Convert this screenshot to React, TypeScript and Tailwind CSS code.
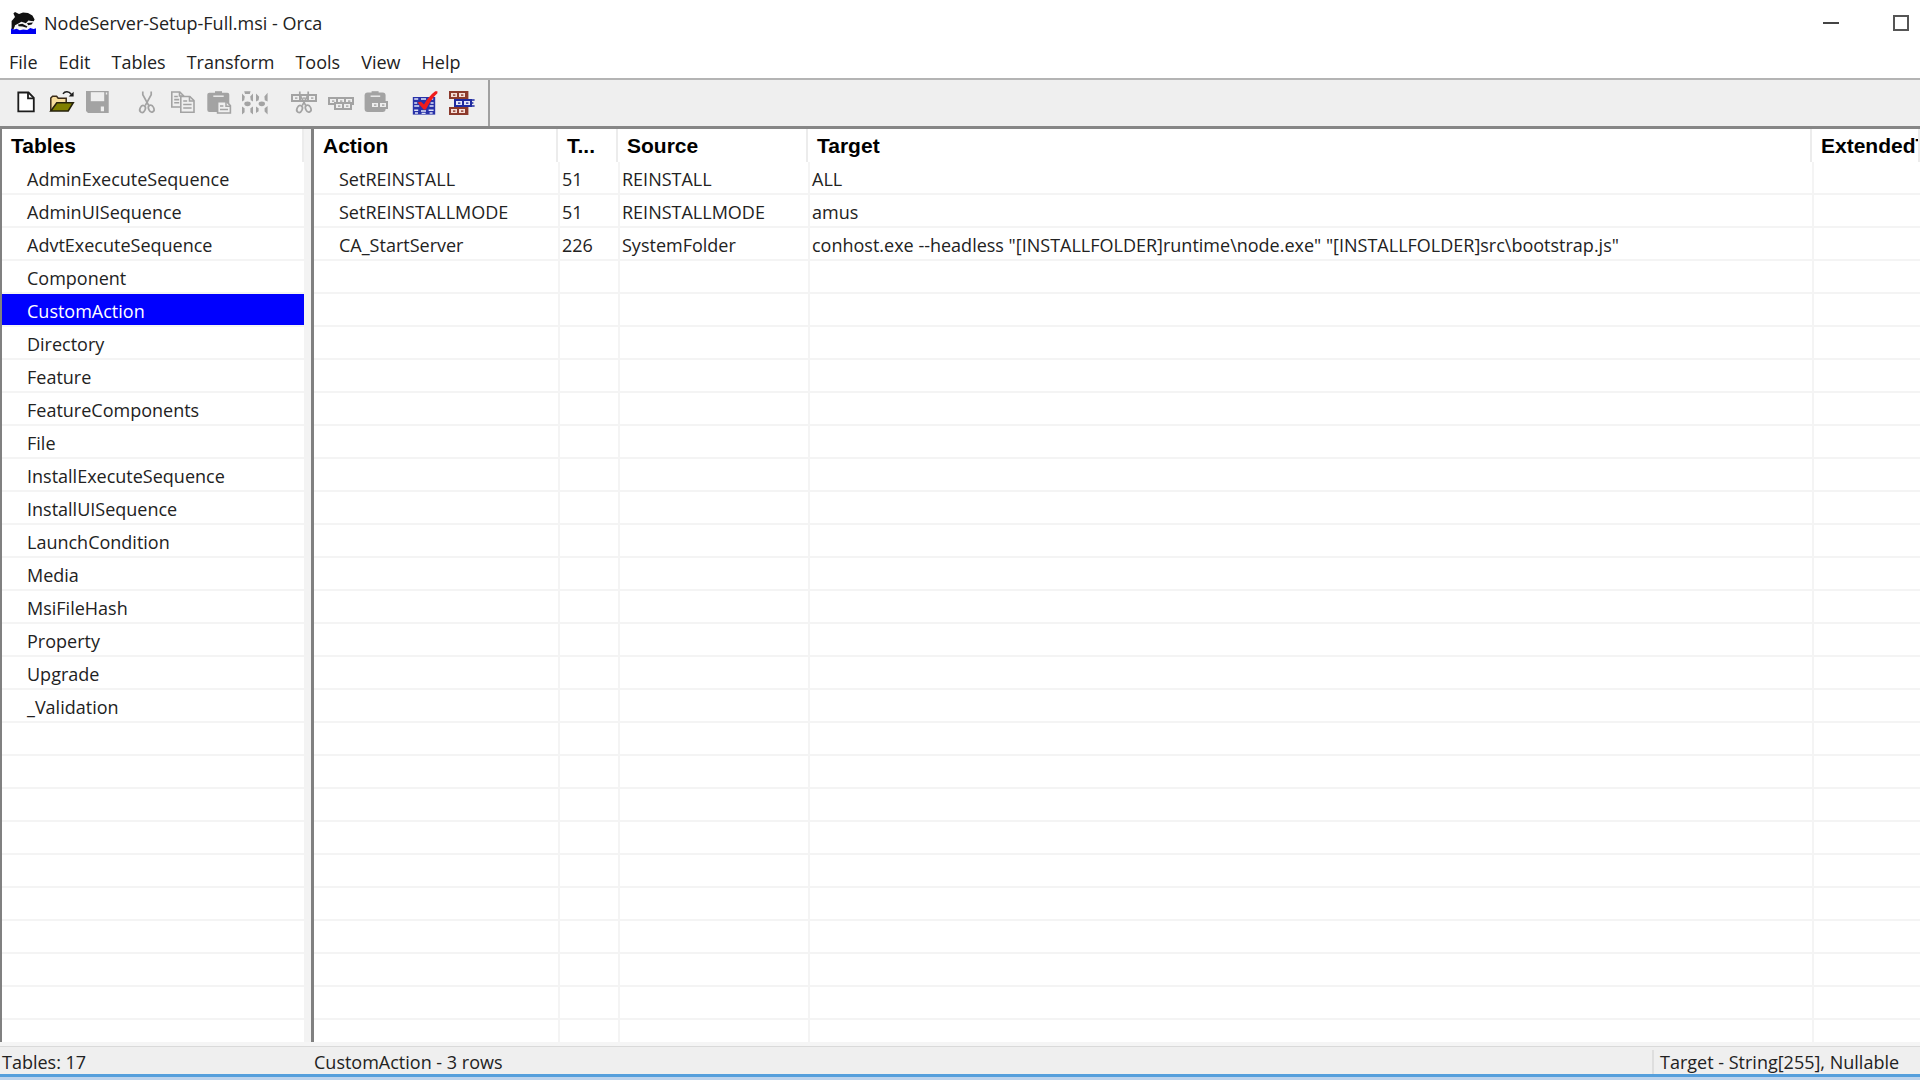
import type { ReactNode } from 'react';

interface ActionRow {
  action: string;
  type: string;
  source: string;
  target: string;
}

interface Tool {
  label: string;
  icon: ReactNode;
  disabled?: boolean;
}

const VISIBLE_ROWS = 27;
const GREY = '#a3a3a3';

const menus = ['File', 'Edit', 'Tables', 'Transform', 'Tools', 'View', 'Help'];

const tables = [
  'AdminExecuteSequence',
  'AdminUISequence',
  'AdvtExecuteSequence',
  'Component',
  'CustomAction',
  'Directory',
  'Feature',
  'FeatureComponents',
  'File',
  'InstallExecuteSequence',
  'InstallUISequence',
  'LaunchCondition',
  'Media',
  'MsiFileHash',
  'Property',
  'Upgrade',
  '_Validation',
];

const actions: ActionRow[] = [
  { action: 'SetREINSTALL', type: '51', source: 'REINSTALL', target: 'ALL' },
  { action: 'SetREINSTALLMODE', type: '51', source: 'REINSTALLMODE', target: 'amus' },
  {
    action: 'CA_StartServer',
    type: '226',
    source: 'SystemFolder',
    target: 'conhost.exe --headless "[INSTALLFOLDER]runtime\\node.exe" "[INSTALLFOLDER]src\\bootstrap.js"',
  },
];

function Icon({ children }: { children: ReactNode }) {
  return (
    <svg width="28" height="28" viewBox="0 0 28 28" fill="none" aria-hidden="true" className="shrink-0">
      {children}
    </svg>
  );
}

// One table row drawn as a bar with small cells
function Cells({ x, y, n, color, fill = '#efefef' }: { x: number; y: number; n: number; color: string; fill?: string }) {
  return (
    <g>
      <rect x={x} y={y} width={n * 8 + 2} height="8" fill={color} />
      {Array.from({ length: n }, (_, i) => (
        <g key={i}>
          <rect x={x + 2 + i * 8} y={y + 2} width="6" height="4" fill={fill} />
          <rect x={x + 4 + i * 8} y={y + 3.4} width="2.4" height="1.4" fill={color} />
        </g>
      ))}
    </g>
  );
}

const scissors = (
  <g stroke={GREY} strokeWidth="1.7">
    <path d="M9.8 3.5v3.2l6 11M18.2 3.5v3.2l-6 11" />
    <ellipse cx="9.6" cy="21" rx="2.6" ry="3.6" transform="rotate(25 9.6 21)" />
    <ellipse cx="18.2" cy="20.6" rx="2.6" ry="3.6" transform="rotate(-25 18.2 20.6)" />
  </g>
);

const toolGroups: Tool[][] = [
  [
    {
      label: 'New',
      icon: (
        <Icon>
          <path d="M6.3 4.5h10.2l5.3 5.3v13.6H6.3z" fill="#fff" stroke="#1c1c1c" strokeWidth="1.8" />
          <path d="M16 4.5v5.8h5.8" stroke="#1c1c1c" strokeWidth="1.8" />
        </Icon>
      ),
    },
    {
      label: 'Open',
      icon: (
        <Icon>
          <path d="M2.8 22.8V10l1.8-1.8h4l1.6 2h8v5" fill="#f7dd9c" stroke="#3a2a18" strokeWidth="1.5" />
          <path d="M8.8 14.8h16.4l-5 8.2H2.8z" fill="#808000" stroke="#26220c" strokeWidth="1.6" />
          <path d="M15 5.8c2-3 6-2.6 8.2.4" stroke="#1c1c1c" strokeWidth="1.5" />
          <path d="M25.6 3.8v4.8h-5z" fill="#1c1c1c" />
        </Icon>
      ),
    },
    {
      label: 'Save',
      disabled: true,
      icon: (
        <Icon>
          <path d="M2 3h22.7v22H4l-2-2z" fill={GREY} />
          <path d="M6.8 4.2h13.4v9H6.8z" fill="#efefef" />
          <path d="M21.8 4.5h1.4v2h-1.4zM16.8 18.5h3.2v4.8h-3.2z" fill="#efefef" />
        </Icon>
      ),
    },
  ],
  [
    { label: 'Cut', disabled: true, icon: <Icon>{scissors}</Icon> },
    {
      label: 'Copy',
      disabled: true,
      icon: (
        <Icon>
          <g stroke={GREY} strokeWidth="1.6">
            <path d="M2.8 4h8l3.8 3.8V19H2.8z" />
            <path d="M10.5 4v4h4M5.2 8.5h3.6M5.2 11.6h5M5.2 14.8h5" />
            <path d="M11.8 8.5h9l4.2 4.2v11.5H11.8z" fill="#efefef" />
            <path d="M20.5 8.5V13H25M14.2 13h4M14.2 16.5h8.4M14.2 20h8.4" />
          </g>
        </Icon>
      ),
    },
    {
      label: 'Paste',
      disabled: true,
      icon: (
        <Icon>
          <rect x="2.3" y="4.8" width="22" height="19.2" rx="2" fill={GREY} />
          <path d="M10 3.2h7v3h-7z" fill={GREY} />
          <path d="M8.3 8.2h10.4" stroke="#efefef" strokeWidth="1.4" />
          <path d="M12.6 13.8h9l3.8 3.8v7.4H12.6z" fill="#efefef" stroke={GREY} strokeWidth="1.6" />
          <path d="M21 13.8v4.4h4.4M15 18h3.4M15 21.6h8" stroke={GREY} strokeWidth="1.5" />
        </Icon>
      ),
    },
    {
      label: 'Delete',
      disabled: true,
      icon: (
        <Icon>
          <g fill={GREY}>
            <path d="M3.2 3.2h6.4L8.8 6H4zM1 5.4l2.8 3-.6 3.8L1 13.4zM12 5.4L9.2 8.4l.6 3.8 2.2 1.2z" />
            <ellipse cx="6.5" cy="15.8" rx="3.2" ry="2.4" />
            <path d="M1 18.4l2.6 1.8v4L1 26.4zM12 18.4l-2.6 1.8v4l2.6 2.2z" />
            <path d="M15 5.4l3.2 3.4-.6 3.4-2.6 1.2zM26.6 4.8v8.8l-2.8-1.4-.4-3.6z" />
            <ellipse cx="20.8" cy="15.8" rx="3.2" ry="2.4" />
            <path d="M15 18.4l2.6 1.8v3L15 25zM26.6 18l-3 2.2v3.4l3 3z" />
          </g>
        </Icon>
      ),
    },
  ],
  [
    {
      label: 'Cut Row',
      disabled: true,
      icon: (
        <Icon>
          <Cells x={1} y={6} n={3} color={GREY} />
          {scissors}
        </Icon>
      ),
    },
    {
      label: 'Copy Row',
      disabled: true,
      icon: (
        <Icon>
          <Cells x={2} y={9} n={3} color={GREY} />
          <Cells x={8} y={14} n={2} color={GREY} />
        </Icon>
      ),
    },
    {
      label: 'Paste Row',
      disabled: true,
      icon: (
        <Icon>
          <rect x="2.6" y="4.6" width="21" height="19.4" rx="3" fill={GREY} />
          <path d="M9.6 3.2h7v3h-7z" fill={GREY} />
          <path d="M8.6 8.2h9.6" stroke="#efefef" strokeWidth="1.4" />
          <Cells x={8} y={13} n={2} color={GREY} />
        </Icon>
      ),
    },
  ],
  [
    {
      label: 'Validate',
      icon: (
        <Icon>
          <rect x="1.8" y="9" width="22.4" height="17.6" fill="#2832a8" />
          <path
            d="M3.2 11h4M10 11h5M17.6 11h4.6M3.2 15h3M19.6 15h3M3.2 18h5M18.6 18h4M3.2 22.2h4M10 23h5M17.6 22.2h5M4 25h3M10.6 25.4h4M18.6 25h3"
            stroke="#dfe3f8"
            strokeWidth="1.4"
          />
          <path d="M24.2 3.2h2.2v2c-5 4.6-8.2 9.8-11.6 16.4h-2.2l-6-7 3.4-.8 3 2.6c3-5.4 6.6-9.6 11.2-13.2z" fill="#f01c1c" />
        </Icon>
      ),
    },
    {
      label: 'Show Patches',
      icon: (
        <Icon>
          <Cells x={2} y={3} n={2} color="#8c3a2c" fill="#f6ddd6" />
          <rect x="19.6" y="3" width="1.8" height="8" fill="#8c3a2c" />
          <Cells x={2} y={19} n={2} color="#8c3a2c" fill="#f6ddd6" />
          <rect x="19.6" y="19" width="1.8" height="8" fill="#8c3a2c" />
          <Cells x={7} y={11} n={2} color="#1f2ba0" fill="#e4e8fb" />
          <path d="M25 12h2.6M25 18h2.6M25 15h1.4" stroke="#1f2ba0" strokeWidth="1.6" />
        </Icon>
      ),
    },
  ],
];

function OrcaLogo() {
  return (
    <svg width="26" height="24" viewBox="0 0 26 24" aria-hidden="true" className="shrink-0">
      <path d="M3 8.4L5 6 3.4 2.4 5 1l4 2 4-1.6L18 2l4.4 2.6 2.2 4-1 1.8-4.2-.2-2.8 1.6 2.6 1.4-1 1.2-5-1.4-4.6.6L5.4 15l-2.2 3.4H1.6V10z" fill="#111" />
      <path d="M4 18.6l1-4.4 3-1.4 3.4-2 4.6 1.4 2.4-2.6 5.6 1-.4 1.8-4.4.8 2.4 2-1.2 3.4H4z" fill="#f6f6f6" />
      <path d="M8 13.4l4.4-.6 5 2.6-.8 1.4-4-1.2-4-.4z" fill="#111" />
      <path d="M17 12l6-.4-1.4 2-3.4.6z" fill="#111" />
      <path d="M1 17.6l3 1 2.6-.8 3.2 1.4 3.4-.6 4 .4 3-2 3.4 1L26 17.2V23H1z" fill="#0000f0" />
    </svg>
  );
}

function TitleBar() {
  return (
    <header className="flex h-[46px] shrink-0 items-center pl-[10px]">
      <OrcaLogo />
      <h1 className="ml-2 flex-1">NodeServer-Setup-Full.msi - Orca</h1>
      <button type="button" aria-label="Minimize" className="flex h-full w-[70px] items-center justify-center">
        <span className="h-[2px] w-4 bg-[#444]" />
      </button>
      <button type="button" aria-label="Maximize" className="flex h-full w-[54px] items-center pl-[27px]">
        <span className="size-4 border-2 border-[#555]" />
      </button>
    </header>
  );
}

function MenuBar() {
  return (
    <nav className="flex h-8 shrink-0 items-center gap-[21px] pl-[9px]">
      {menus.map((menu) => (
        <button key={menu} type="button">
          {menu}
        </button>
      ))}
    </nav>
  );
}

function Toolbar() {
  return (
    <div className="flex shrink-0 border-t-2 border-[#b4b4b4] bg-[#efefef]">
      <div className="flex h-[46px] items-center gap-[13px] border-r-2 border-[#a0a0a0] pr-[9px] pb-[2px] pl-2">
        {toolGroups.map((group, i) => (
          <div key={i} className="flex">
            {group.map((tool) => (
              <button
                key={tool.label}
                type="button"
                aria-label={tool.label}
                disabled={tool.disabled}
                className="flex h-9 w-9 items-center justify-center"
              >
                {tool.icon}
              </button>
            ))}
          </div>
        ))}
      </div>
    </div>
  );
}

const headCell = 'h-[33px] border-r-2 border-[#ececec] p-0 pl-[9px] text-left text-[21px] leading-6 font-bold text-black';
const headFont = 'font-["Liberation_Sans",sans-serif]';
const bodyCell = 'h-[33px] border-b-2 border-[#f4f4f4] p-0 pt-[2px] whitespace-nowrap';

function TableList() {
  return (
    <aside className="w-[311px] shrink-0 overflow-hidden border-l-2 border-[#808080] bg-[#f3f3f3]">
      <table className="w-[302px] table-fixed border-separate border-spacing-0 bg-white">
        <thead>
          <tr className={headFont}>
            <th className={headCell}>Tables</th>
          </tr>
        </thead>
        <tbody>
          {Array.from({ length: VISIBLE_ROWS }, (_, i) => (
            <tr key={i} className={tables[i] === 'CustomAction' ? 'bg-[#0000ff] text-white' : ''}>
              <td className={bodyCell}>
                {tables[i] && (
                  <button type="button" className="block w-full pl-[25px] text-left">
                    {tables[i]}
                  </button>
                )}
              </td>
            </tr>
          ))}
        </tbody>
      </table>
    </aside>
  );
}

function ActionTable() {
  return (
    <main className="min-w-0 flex-1 overflow-hidden border-l-3 border-[#808080] bg-white">
      <table className="w-full table-fixed border-separate border-spacing-0">
        <colgroup>
          <col className="w-[244px]" />
          <col className="w-[60px]" />
          <col className="w-[190px]" />
          <col />
          <col className="w-[108px]" />
        </colgroup>
        <thead>
          <tr className={headFont}>
            <th className={headCell}>Action</th>
            <th className={headCell}>T...</th>
            <th className={headCell}>Source</th>
            <th className={headCell}>Target</th>
            <th className={`${headCell} overflow-hidden border-r-0`}>ExtendedType</th>
          </tr>
        </thead>
        <tbody>
          {Array.from({ length: VISIBLE_ROWS }, (_, i) => {
            const row = actions[i];
            return (
              <tr key={i}>
                <td className={`${bodyCell} pl-[25px]`}>{row?.action}</td>
                <td className={`${bodyCell} border-l-2 pl-[2px]`}>{row?.type}</td>
                <td className={`${bodyCell} border-l-2 pl-[2px]`}>{row?.source}</td>
                <td className={`${bodyCell} border-l-2 pl-[2px]`}>{row?.target}</td>
                <td className={`${bodyCell} border-l-2`} />
              </tr>
            );
          })}
        </tbody>
      </table>
    </main>
  );
}

function StatusBar() {
  return (
    <footer className="shrink-0 border-t-4 border-[#f5f5f5]">
      <div className="flex h-7 items-center border-t border-[#dadada] bg-[#efefef] pt-[2px]">
        <span className="w-[314px] pl-[2px]">Tables: 17</span>
        <span className="flex-1">CustomAction - 3 rows</span>
        <span className="w-[268px] border-l-2 border-[#dedede] pl-[6px]">Target - String[255], Nullable</span>
      </div>
      <div className="h-[6px] border-t-3 border-[#559fdc] bg-[#bdd3ec]" />
    </footer>
  );
}

export default function App() {
  return (
    <div className='flex h-screen flex-col overflow-hidden bg-white font-["Open_Sans","Noto_Sans",sans-serif] text-lg leading-6 text-[#222]'>
      <TitleBar />
      <MenuBar />
      <Toolbar />
      <div className="flex min-h-0 flex-1 border-t-3 border-[#868686]">
        <TableList />
        <ActionTable />
      </div>
      <StatusBar />
    </div>
  );
}
